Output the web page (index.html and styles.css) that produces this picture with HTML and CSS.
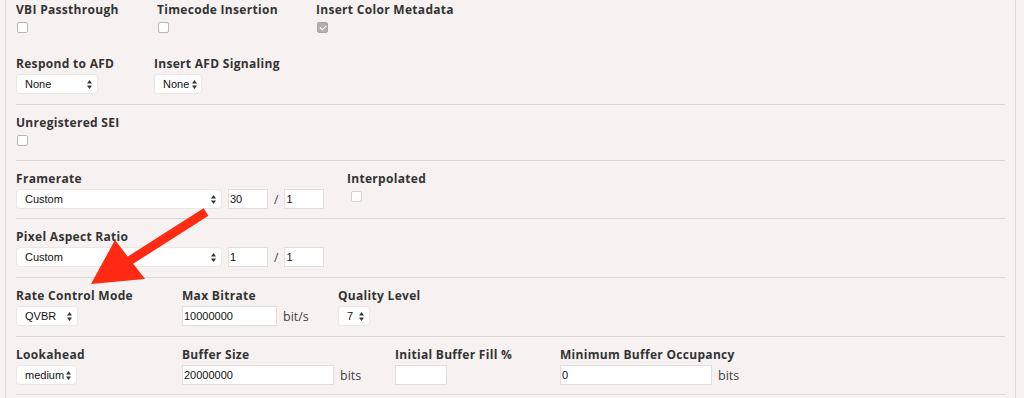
FILE: index.html
```html
<!DOCTYPE html>
<html lang="en">
<head>
    <meta charset="utf-8" />
    <title>Video settings</title>
    <link rel="stylesheet" href="styles.css">
</head>
<body>
<div class="panel">

    <section class="group group--first">
        <div class="row row--spaced">
            <div class="field w-141">
                <label>VBI Passthrough</label>
                <div class="control control--check"><span class="check"></span></div>
            </div>
            <div class="field w-159">
                <label>Timecode Insertion</label>
                <div class="control control--check"><span class="check"></span></div>
            </div>
            <div class="field">
                <label>Insert Color Metadata</label>
                <div class="control control--check"><span class="check check--on"></span></div>
            </div>
        </div>
        <div class="row">
            <div class="field w-138">
                <label>Respond to AFD</label>
                <div class="control"><div class="select s-82">None<svg class="arrows" width="5" height="9" viewBox="0 0 5 9"><path d="M2.5 0 5 3.5H0zM2.5 9 5 5.5H0z"/></svg></div></div>
            </div>
            <div class="field">
                <label>Insert AFD Signaling</label>
                <div class="control"><div class="select s-48">None<svg class="arrows" width="5" height="9" viewBox="0 0 5 9"><path d="M2.5 0 5 3.5H0zM2.5 9 5 5.5H0z"/></svg></div></div>
            </div>
        </div>
    </section>

    <section class="group">
        <div class="row">
            <div class="field">
                <label>Unregistered SEI</label>
                <div class="control control--check"><span class="check"></span></div>
            </div>
        </div>
    </section>

    <section class="group">
        <div class="row">
            <div class="field w-331">
                <label>Framerate</label>
                <div class="control">
                    <div class="select s-206">Custom<svg class="arrows" width="5" height="9" viewBox="0 0 5 9"><path d="M2.5 0 5 3.5H0zM2.5 9 5 5.5H0z"/></svg></div>
                    <input class="input i-40" value="30">
                    <span class="slash">/</span>
                    <input class="input i-40" value="1">
                </div>
            </div>
            <div class="field">
                <label>Interpolated</label>
                <div class="control control--check"><span class="check check--off"></span></div>
            </div>
        </div>
    </section>

    <section class="group group--tall">
        <div class="row">
            <div class="field">
                <label>Pixel Aspect Ratio</label>
                <div class="control">
                    <div class="select s-206">Custom<svg class="arrows" width="5" height="9" viewBox="0 0 5 9"><path d="M2.5 0 5 3.5H0zM2.5 9 5 5.5H0z"/></svg></div>
                    <input class="input i-40" value="1">
                    <span class="slash">/</span>
                    <input class="input i-40" value="1">
                </div>
            </div>
        </div>
    </section>

    <section class="group group--tall">
        <div class="row">
            <div class="field w-166">
                <label>Rate Control Mode</label>
                <div class="control"><div class="select s-62">QVBR<svg class="arrows" width="5" height="9" viewBox="0 0 5 9"><path d="M2.5 0 5 3.5H0zM2.5 9 5 5.5H0z"/></svg></div></div>
            </div>
            <div class="field w-156">
                <label>Max Bitrate</label>
                <div class="control"><input class="input i-95" value="10000000"><span class="unit">bit/s</span></div>
            </div>
            <div class="field">
                <label>Quality Level</label>
                <div class="control"><div class="select s-32">7<svg class="arrows" width="5" height="9" viewBox="0 0 5 9"><path d="M2.5 0 5 3.5H0zM2.5 9 5 5.5H0z"/></svg></div></div>
            </div>
        </div>
    </section>

    <section class="group">
        <div class="row">
            <div class="field w-166">
                <label>Lookahead</label>
                <div class="control"><div class="select s-61">medium<svg class="arrows" width="5" height="9" viewBox="0 0 5 9"><path d="M2.5 0 5 3.5H0zM2.5 9 5 5.5H0z"/></svg></div></div>
            </div>
            <div class="field w-213">
                <label>Buffer Size</label>
                <div class="control"><input class="input i-152" value="20000000"><span class="unit">bits</span></div>
            </div>
            <div class="field w-165">
                <label>Initial Buffer Fill %</label>
                <div class="control"><input class="input i-52" value=""></div>
            </div>
            <div class="field">
                <label>Minimum Buffer Occupancy</label>
                <div class="control"><input class="input i-152" value="0"><span class="unit">bits</span></div>
            </div>
        </div>
    </section>

    <!-- annotation arrow drawn over the form -->
    <svg class="annotation" width="220" height="290" viewBox="0 0 220 290">
        <line x1="206" y1="212" x2="126" y2="263" stroke="#fe2a14" stroke-width="9"/>
        <polygon points="91,284 115,240 145,279" fill="#fe2a14"/>
    </svg>
</div>
</body>
</html>
```

FILE: styles.css
```css
:root{
    --bg:#f6f2f1;
    --line:#dcd8d7;
    --field-border:#e2dedd;
    --text:#333;
}
*{
    box-sizing:border-box;
}
body{
    margin:0;
    background:var(--bg);
    font-family:"Open Sans",Arial,sans-serif;
    color:var(--text);
}
.panel{
    position:relative;
    margin-left:5px;
    width:1011px;
    padding:0 10px;
    border-left:1px solid var(--line);
    border-right:1px solid var(--line);
    min-height:398px;
}
.group{
    padding:10px 0 9px;
    border-bottom:1px solid var(--line);
}
.group--first{
    padding:2px 0 10px;
}
.group--tall{
    padding-bottom:10px;
}
.row{
    display:flex;
}
.row--spaced{
    margin-bottom:18px;
}
.field label{
    display:block;
    font-size:12px;
    font-weight:700;
    line-height:16px;
    letter-spacing:.3px;
    margin-bottom:2px;
    white-space:nowrap;
}
.control{
    display:flex;
    align-items:center;
    height:20px;
}
.control--check{
    align-items:flex-start;
    height:18px;
}
.w-138{ width:138px; }
.w-141{ width:141px; }
.w-156{ width:156px; }
.w-159{ width:159px; }
.w-165{ width:165px; }
.w-166{ width:166px; }
.w-213{ width:213px; }
.w-331{ width:331px; }

.check{
    display:inline-block;
    width:11px;
    height:11px;
    margin:2px 0 0 1px;
    background:#fff;
    border:1px solid #b9b6b5;
    border-radius:2px;
    position:relative;
}
.check--on{
    background:#b3b0af;
    border-color:#a9a6a5;
}
.check--on::after{
    content:"";
    position:absolute;
    left:3px;
    top:1px;
    width:3px;
    height:5px;
    border:solid #fff;
    border-width:0 1.5px 1.5px 0;
    transform:rotate(45deg);
}
.check--off{
    border-color:#d3d0cf;
    margin-left:4px;
}

.select{
    display:flex;
    align-items:center;
    justify-content:space-between;
    height:20px;
    padding:0 5px 0 8px;
    background:#fff;
    border:1px solid #ebe7e6;
    border-radius:4px;
    font-family:"Liberation Sans",Arial,sans-serif;
    font-size:11px;
    color:#111;
}
.arrows{
    fill:#333;
    flex:none;
}
.s-32{ width:32px; }
.s-48{ width:48px; padding-right:4px; }
.s-61{ width:61px; }
.s-62{ width:62px; }
.s-82{ width:82px; }
.s-206{ width:206px; }

.input{
    height:20px;
    margin:0 0 0 6px;
    padding:0 1px;
    background:#fff;
    border:1px solid var(--field-border);
    border-radius:0;
    font-family:"Liberation Sans",Arial,sans-serif;
    font-size:11px;
    color:#111;
    outline:none;
}
.control > .input:first-child{
    margin-left:0;
}
.i-40{ width:40px; }
.i-52{ width:52px; }
.i-95{ width:95px; }
.i-152{ width:152px; }

.slash{
    font-size:12px;
    margin-left:6px;
    color:#444;
}
.slash + .input{
    margin-left:6px;
}
.unit{
    margin-left:6px;
    font-size:12.5px;
    color:#444;
}
.annotation{
    position:absolute;
    left:-6px;
    top:0;
    pointer-events:none;
}
```
